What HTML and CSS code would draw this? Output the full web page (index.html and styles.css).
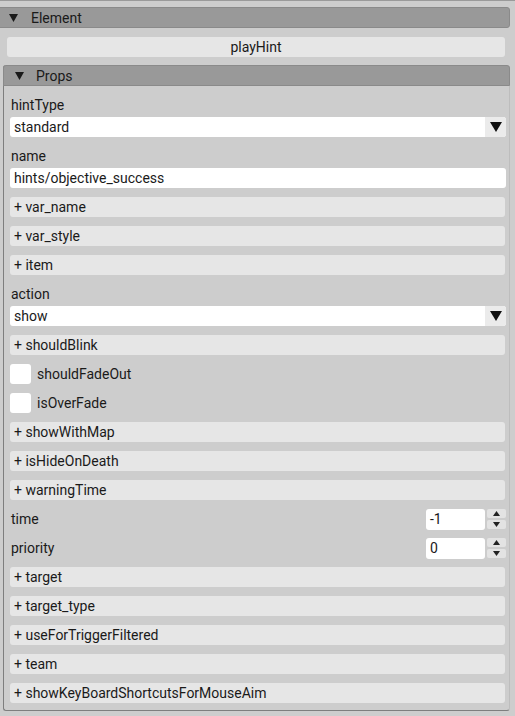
FILE: index.html
```html
<!DOCTYPE html>
<html>
<head>
<meta charset="utf-8">
<link rel="stylesheet" href="styles.css">
</head>
<body>
<div class="root">
  <div class="head element-head">
    <svg class="tri" width="9" height="8" viewBox="0 0 9 8"><polygon points="0,0 9,0 4.5,8" fill="#1a1a1a"/></svg>
    <span>Element</span>
  </div>
  <div class="name-btn">playHint</div>
  <div class="props">
    <div class="head props-head">
      <svg class="tri" width="9" height="8" viewBox="0 0 9 8"><polygon points="0,0 9,0 4.5,8" fill="#1a1a1a"/></svg>
      <span>Props</span>
    </div>
    <div class="props-body">
      <div class="field">
        <div class="label">hintType</div>
        <div class="select"><span class="val">standard</span><span class="arrow"><svg width="12" height="10" viewBox="0 0 12 10"><polygon points="0,0 12,0 6,10" fill="#111"/></svg></span></div>
      </div>
      <div class="field">
        <div class="label">name</div>
        <div class="input">hints/objective_success</div>
      </div>
      <div class="item">+ var_name</div>
      <div class="item">+ var_style</div>
      <div class="item">+ item</div>
      <div class="field">
        <div class="label">action</div>
        <div class="select"><span class="val">show</span><span class="arrow"><svg width="12" height="10" viewBox="0 0 12 10"><polygon points="0,0 12,0 6,10" fill="#111"/></svg></span></div>
      </div>
      <div class="item">+ shouldBlink</div>
      <div class="check-row"><span class="box"></span><span>shouldFadeOut</span></div>
      <div class="check-row"><span class="box"></span><span>isOverFade</span></div>
      <div class="item">+ showWithMap</div>
      <div class="item">+ isHideOnDeath</div>
      <div class="item">+ warningTime</div>
      <div class="num-row">
        <span class="num-label">time</span>
        <span class="num">-1</span>
        <span class="spin"><span class="sb"><svg width="7" height="5" viewBox="0 0 7 5"><polygon points="0,5 7,5 3.5,0" fill="#222"/></svg></span><span class="sb"><svg width="7" height="5" viewBox="0 0 7 5"><polygon points="0,0 7,0 3.5,5" fill="#222"/></svg></span></span>
      </div>
      <div class="num-row">
        <span class="num-label">priority</span>
        <span class="num">0</span>
        <span class="spin"><span class="sb"><svg width="7" height="5" viewBox="0 0 7 5"><polygon points="0,5 7,5 3.5,0" fill="#222"/></svg></span><span class="sb"><svg width="7" height="5" viewBox="0 0 7 5"><polygon points="0,0 7,0 3.5,5" fill="#222"/></svg></span></span>
      </div>
      <div class="item">+ target</div>
      <div class="item">+ target_type</div>
      <div class="item">+ useForTriggerFiltered</div>
      <div class="item">+ team</div>
      <div class="item">+ showKeyBoardShortcutsForMouseAim</div>
    </div>
  </div>
</div>
</body>
</html>
```

FILE: styles.css
```css
html, body {
  margin: 0;
  padding: 0;
  background: #cdcdcd;
}
body {
  font-family: Roboto, "Liberation Sans", sans-serif;
  font-size: 14px;
  color: #1a1a1a;
  width: 515px;
  height: 716px;
  overflow: hidden;
}
.root {
  border-top: 1px solid #9a9a9a;
  padding-top: 6px;
}
.head {
  box-sizing: border-box;
  height: 21px;
  background: #999999;
  display: flex;
  align-items: center;
}
.element-head {
  margin: 0 5px 0 -3px;
  border: 1px solid #8a8a8a;
  border-radius: 3px;
  padding-left: 11px;
}
.element-head .tri {
  margin-right: 13px;
}
.name-btn {
  margin: 9px 10px 0 7px;
  height: 20px;
  line-height: 20px;
  background: #e6e6e6;
  border-radius: 3px;
  text-align: center;
}
.props {
  margin: 8px 5px 0 3px;
  border-left: 1px solid #7e7e7e;
  border-bottom: 1px solid #7e7e7e;
  border-right: 1px solid #bdbdbd;
  border-radius: 3px;
  height: 646px;
  box-sizing: border-box;
}
.props-head {
  margin: 0 -1px 0 -1px;
  border: 1px solid #8a8a8a;
  border-radius: 3px 3px 0 0;
  padding-left: 11px;
}
.props-head .tri {
  margin-right: 12px;
}
.props-body {
  display: flex;
  flex-direction: column;
  gap: 9px;
  padding: 9px 3px 8px 6px;
}
.field {
  display: flex;
  flex-direction: column;
  gap: 2px;
}
.label {
  height: 20px;
  line-height: 20px;
  padding-left: 1px;
}
.select {
  height: 20px;
  display: flex;
  background: #ffffff;
  border-radius: 3px;
}
.select .val {
  flex: 1;
  line-height: 20px;
  padding-left: 4px;
}
.select .arrow {
  width: 21px;
  background: #ebebeb;
  border-radius: 0 3px 3px 0;
  display: flex;
  align-items: center;
  justify-content: center;
}
.input {
  height: 20px;
  line-height: 20px;
  background: #ffffff;
  border-radius: 3px;
  padding-left: 4px;
}
.item {
  height: 20px;
  line-height: 20px;
  background: #e6e6e6;
  border-radius: 3px;
  padding-left: 4px;
  margin-right: 1px;
}
.check-row {
  height: 20px;
  display: flex;
  align-items: center;
  gap: 6px;
}
.check-row .box {
  width: 21px;
  height: 20px;
  background: #ffffff;
  border-radius: 3px;
}
.num-row {
  height: 20px;
  display: flex;
  align-items: center;
}
.num-label {
  flex: 1;
  padding-left: 1px;
}
.num {
  box-sizing: border-box;
  width: 59px;
  height: 21px;
  line-height: 21px;
  background: #ffffff;
  border-radius: 3px;
  padding-left: 4px;
}
.spin {
  width: 19px;
  margin-left: 2px;
  display: flex;
  flex-direction: column;
  gap: 2px;
}
.sb {
  height: 9px;
  background: #e3e3e3;
  border-radius: 2px;
  display: flex;
  align-items: center;
  justify-content: center;
}
```
